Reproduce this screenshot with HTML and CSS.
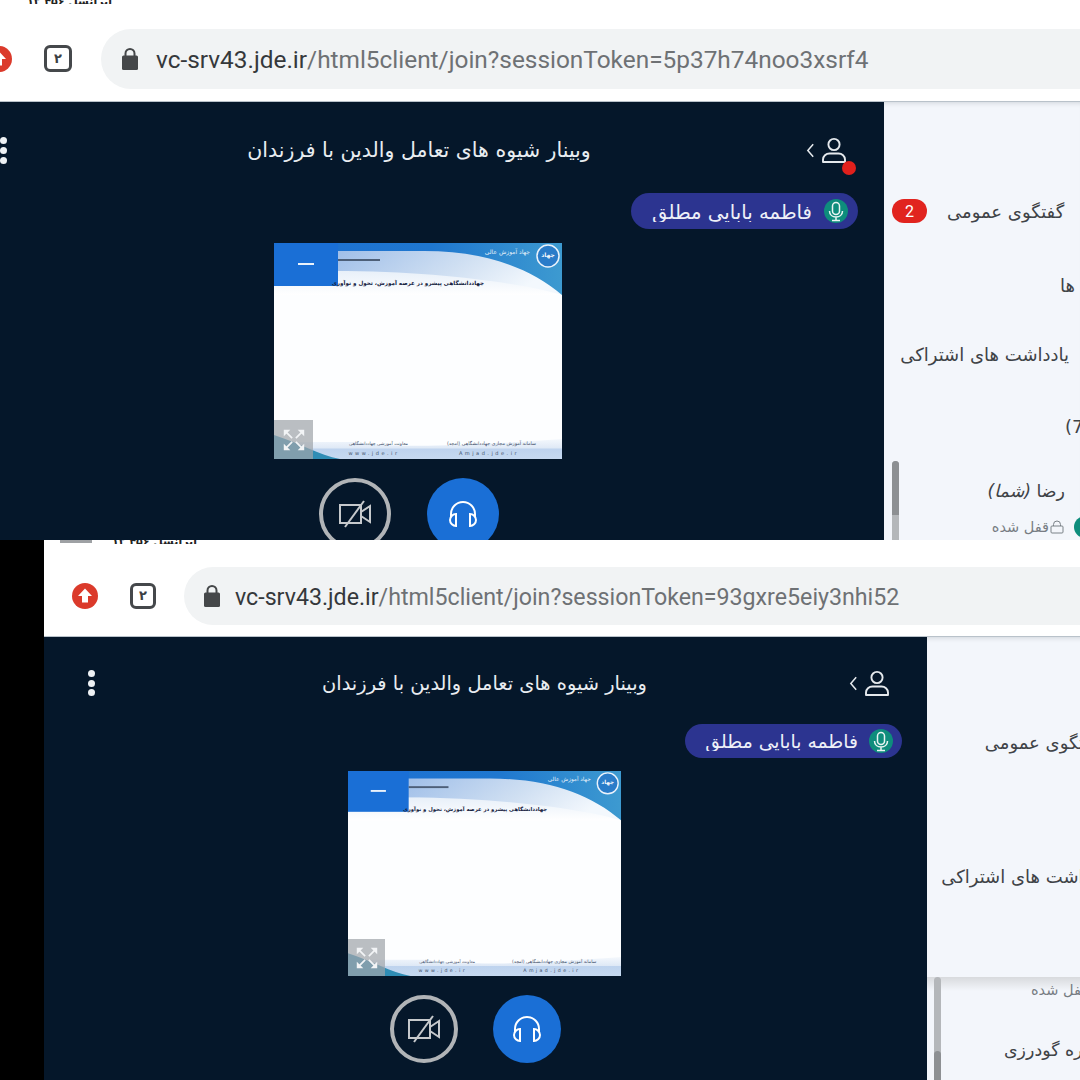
FILE: index.html
```html
<!DOCTYPE html>
<html lang="fa">
<head>
<meta charset="utf-8">
<title>وبینار</title>
<link rel="stylesheet" href="styles.css">
</head>
<body>
<svg class="defs" width="0" height="0">
  <defs>
    <linearGradient id="bandGrad" x1="0" y1="0" x2="1" y2="0"><stop offset="0" stop-color="#1d70d2"/><stop offset=".55" stop-color="#1f77cf"/><stop offset="1" stop-color="#3d9ad0"/></linearGradient>
    <linearGradient id="sheenGrad" x1="0" y1="0" x2="1" y2="0.3"><stop offset="0" stop-color="#9dbde8"/><stop offset=".6" stop-color="#cfdff2"/><stop offset="1" stop-color="#f3f8fd"/></linearGradient>
    <linearGradient id="fadeGrad" x1="0" y1="0" x2="0" y2="1"><stop offset="0" stop-color="#e8f0f9"/><stop offset="1" stop-color="#ffffff"/></linearGradient>
    <linearGradient id="footGrad" x1="0" y1="0" x2="0" y2="1"><stop offset="0" stop-color="#f4f8fd"/><stop offset=".45" stop-color="#dfe9f6"/><stop offset=".5" stop-color="#bed3ee"/><stop offset="1" stop-color="#c6d9f0"/></linearGradient>
    <symbol id="slide" viewBox="0 0 288 216" preserveAspectRatio="none">
      <rect width="288" height="216" fill="#fdfeff"/>
      <rect y="28" width="288" height="24" fill="url(#fadeGrad)"/>
      <path d="M60 4H288V52C255 42 170 28 60 28Z" fill="url(#sheenGrad)"/>
      <path d="M0 8H150C210 8 255 24 288 52V0H0Z" fill="url(#bandGrad)"/>
      <rect width="64" height="43" fill="#1a6fd6"/>
      <rect x="24" y="20" width="16" height="2" fill="#eaf2fb"/>
      <ellipse cx="274" cy="13" rx="11" ry="11" fill="#2a7cc9" stroke="#eaf2fb" stroke-width="1.500"/>
      <text class="slide-logo" x="274" y="14" text-anchor="middle">جهاد</text>
      <text class="slide-brand" x="256" y="11" text-anchor="end">جهاد آموزش عالی</text>
      <rect x="64" y="16" width="42" height="2" fill="#4d5f78"/>
      <path d="M0 199H80C120 205 180 204 288 196V216H0Z" fill="url(#footGrad)"/>
      <path d="M0 192C25 200 45 212 66 216H0Z" fill="#2f8db5"/>
      <text class="slide-head" x="210" y="42" text-anchor="end">جهاددانشگاهی پیشرو در عرصه آموزش، تحول و نوآوری</text>
      <text class="slide-foot wide" x="262" y="202" text-anchor="end">سامانه آموزش مجازی جهاددانشگاهی (امجد)</text>
      <text class="slide-foot" x="134" y="202" text-anchor="end">معاونت آموزشی جهاددانشگاهی</text>
      <text class="slide-url" x="100" y="212" text-anchor="middle">www.jde.ir</text>
      <text class="slide-url" x="215" y="212" text-anchor="middle">Amjad.jde.ir</text>
    </symbol>
    <symbol id="user" viewBox="0 0 26 26"><circle cx="13" cy="7.5" r="5.6" fill="none" stroke="currentColor" stroke-width="1.9"/><path d="M2 25v-2.5c0-3.500 3-6 6.500-6h9c3.500 0 6.500 2.500 6.500 6V25Z" fill="none" stroke="currentColor" stroke-width="1.9" stroke-linejoin="round"/></symbol>
    <symbol id="chev" viewBox="0 0 10 18"><path d="M8 2 2 9l6 7" fill="none" stroke="currentColor" stroke-width="1.7"/></symbol>
    <symbol id="mic" viewBox="0 0 24 24"><circle cx="12" cy="12" r="12" fill="#0e8d7c"/><rect x="8.500" y="3.500" width="7" height="12" rx="3.500" fill="none" stroke="#e9f5f3" stroke-width="1.500"/><path d="M5.500 12c0 8 13 8 13 0M12 17.500v3.500M8 21.500h8" fill="none" stroke="#e9f5f3" stroke-width="1.500"/></symbol>
    <symbol id="lock" viewBox="0 0 16 23"><path d="M3.500 9V6.500a4.500 4.500 0 0 1 9 0V9" fill="none" stroke="#454749" stroke-width="2"/><rect y="8.500" width="16" height="14.500" rx="1.500" fill="#454749"/></symbol>
    <symbol id="up" viewBox="0 0 26 26"><circle cx="13" cy="13" r="13" fill="#db3a2b"/><path d="M13 5.500 20 13h-4v6.500h-6V13H6Z" fill="#fff"/></symbol>
    <symbol id="cam" viewBox="0 0 34 28"><path d="M2 5h21v18H2ZM23 12l9-6v16l-9-6" fill="none" stroke="#c6c9cc" stroke-width="2"/><path d="M7 27 26 1" stroke="#c6c9cc" stroke-width="2"/></symbol>
    <symbol id="phones" viewBox="0 0 32 30"><path d="M4 19v-4a12 12 0 0 1 24 0v4" fill="none" stroke="#fff" stroke-width="2"/><path d="M9 15v12c-3 0-6-2.500-6-6s3-6 6-6ZM23 15v12c3 0 6-2.500 6-6s-3-6-6-6Z" fill="#1a6fd6" stroke="#fff" stroke-width="2"/></symbol>
    <symbol id="expand" viewBox="0 0 28 28"><path d="M3 3h7L3 10ZM25 3h-7l7 7ZM3 25h7l-7-7ZM25 25h-7l7-7Z" fill="#f2f4f6"/><path d="M5 5l7 7M23 5l-7 7M5 23l7-7M23 23l-7-7" stroke="#f2f4f6" stroke-width="1.800"/></symbol>
    <symbol id="tinylock" viewBox="0 0 14 14"><path d="M3.500 6V4.500a3.500 3.500 0 0 1 7 0V6" fill="none" stroke="#7b8288"/><rect x="1" y="6" width="12" height="7" rx="1" fill="none" stroke="#7b8288"/></symbol>
  </defs>
</svg>

<section class="shot shot-a">
  <div class="status"><span class="status-text">ایرانسل ۴۵۶ ۱۲</span></div>
  <div class="toolbar">
    <svg class="up-icon"><use href="#up"/></svg>
    <div class="tab-icon">۲</div>
    <div class="omnibox">
      <svg class="lock-icon"><use href="#lock"/></svg>
      <div class="url" dir="ltr"><span class="host">vc-srv43.jde.ir</span>/html5client/join?sessionToken=5p37h74noo3xsrf4</div>
    </div>
  </div>
  <div class="body">
    <main class="main">
      <header class="head">
        <div class="kebab"><i></i><i></i><i></i></div>
        <h1 class="title">وبینار شیوه های تعامل والدین با فرزندان</h1>
        <div class="users">
          <svg class="chev"><use href="#chev"/></svg>
          <svg class="user"><use href="#user"/></svg>
          <span class="red-dot"></span>
        </div>
      </header>
      <div class="talk-row">
        <div class="pill"><svg class="mic"><use href="#mic"/></svg><span class="name">فاطمه بابایی مطلق</span></div>
      </div>
      <div class="stage">
        <div class="slide"><svg class="slide-art"><use href="#slide"/></svg><div class="expand"><svg><use href="#expand"/></svg></div></div>
      </div>
      <div class="controls">
        <div class="round cam"><svg><use href="#cam"/></svg></div>
        <div class="round audio"><svg><use href="#phones"/></svg></div>
      </div>
    </main>
    <aside class="side">
      <div class="row row-chat"><span class="badge">2</span><span>گفتگوی عمومی</span></div>
      <div class="row row-ha"><span>ها</span></div>
      <div class="row row-notes"><span>یادداشت های اشتراکی</span></div>
      <div class="row row-count"><span dir="ltr">(7</span></div>
      <div class="list">
        <div class="scrollbar"><i></i></div>
        <div class="person">
          <div class="person-name">رضا <em>(شما)</em></div>
          <div class="person-state"><span class="avatar"></span><svg class="tiny"><use href="#tinylock"/></svg><span>قفل شده</span></div>
        </div>
      </div>
    </aside>
  </div>
</section>

<section class="shot shot-b">
  <div class="status"><span class="status-box"></span><span class="status-text">ایرانسل ۴۵۶ ۱۲</span></div>
  <div class="toolbar">
    <svg class="up-icon"><use href="#up"/></svg>
    <div class="tab-icon">۲</div>
    <div class="omnibox">
      <svg class="lock-icon"><use href="#lock"/></svg>
      <div class="url" dir="ltr"><span class="host">vc-srv43.jde.ir</span>/html5client/join?sessionToken=93gxre5eiy3nhi52</div>
    </div>
  </div>
  <div class="body">
    <main class="main">
      <header class="head">
        <div class="kebab"><i></i><i></i><i></i></div>
        <h1 class="title">وبینار شیوه های تعامل والدین با فرزندان</h1>
        <div class="users">
          <svg class="chev"><use href="#chev"/></svg>
          <svg class="user"><use href="#user"/></svg>
        </div>
      </header>
      <div class="talk-row">
        <div class="pill"><svg class="mic"><use href="#mic"/></svg><span class="name">فاطمه بابایی مطلق</span></div>
      </div>
      <div class="stage">
        <div class="slide"><svg class="slide-art"><use href="#slide"/></svg><div class="expand"><svg><use href="#expand"/></svg></div></div>
      </div>
      <div class="controls">
        <div class="round cam"><svg><use href="#cam"/></svg></div>
        <div class="round audio"><svg><use href="#phones"/></svg></div>
      </div>
    </main>
    <aside class="side">
      <div class="row row-chat"><span>گفتگوی عمومی</span></div>
      <div class="row row-notes"><span>یادداشت های اشتراکی</span></div>
      <div class="list">
        <div class="scrollbar"><i></i></div>
        <div class="person">
          <div class="person-state"><span>قفل شده</span></div>
          <div class="person-name">زهره گودرزی</div>
        </div>
      </div>
    </aside>
  </div>
</section>
</body>
</html>
```

FILE: styles.css
```css
* { box-sizing: border-box; }
html, body { margin: 0; padding: 0; }
body { width: 1080px; height: 1080px; overflow: hidden; background: #000; font-family: "DejaVu Sans", sans-serif; }
.defs { position: absolute; }

.shot { height: 540px; overflow: hidden; display: flex; flex-direction: column; position: relative; }
.shot-a { background: #fff; }
.shot-b { margin-left: 44px; background: #fff; }

/* toolbar */
.toolbar { flex: none; display: flex; align-items: center; background: #fff; border-bottom: 1px solid #b9c2ca; }
.shot-a .toolbar { height: 102px; padding-top: 16px; padding-left: 0; }
.shot-b .toolbar { height: 97px; padding-left: 28px; padding-top: 15px; }
.up-icon { flex: none; width: 26px; height: 26px; }
.shot-a .up-icon { margin-left: -14px; }
.tab-icon { flex: none; display: flex; align-items: center; justify-content: center; border: 3px solid #45484b; border-radius: 6px; color: #3c3f42; font: 700 13px "DejaVu Sans", sans-serif; }
.shot-a .tab-icon { width: 28px; height: 27px; margin-left: 32px; }
.shot-b .tab-icon { width: 26px; height: 26px; margin-left: 32px; }
.omnibox { flex: none; display: flex; align-items: center; background: #f1f3f4; border-radius: 30px; width: 1100px; }
.shot-a .omnibox { height: 60px; margin-left: 29px; padding-left: 21px; gap: 18px; }
.shot-b .omnibox { height: 58px; margin-left: 28px; padding-left: 20px; gap: 15px; }
.lock-icon { flex: none; width: 16px; height: 23px; }
.url { font-family: Roboto, sans-serif; color: #6e7174; white-space: nowrap; padding-top: 2px; }
.host { color: #35383b; }
.shot-a .url { font-size: 24.4px; }
.shot-b .url { font-size: 23.2px; }

/* body */
.body { flex: 1; display: flex; min-height: 0; }
.main { flex: none; display: flex; flex-direction: column; background: #05172a; color: #e9edf1; }
.main > * { flex: none; }
.shot-a .main { width: 884px; }
.shot-b .main { width: 883px; }

.head { display: flex; align-items: center; position: relative; }
.shot-a .head { height: 96px; padding: 0 37px 0 0; }
.shot-b .head { height: 92px; padding: 0 37px 0 0; }
.kebab { flex: none; display: flex; flex-direction: column; justify-content: space-between; }
.kebab i { display: block; border-radius: 50%; background: #eef1f4; }
.shot-a .kebab { width: 7px; height: 27px; margin-left: 0; }
.shot-a .kebab i { width: 7px; height: 7px; }
.shot-b .kebab { width: 7px; height: 26px; margin-left: 44px; }
.shot-b .kebab i { width: 7px; height: 7px; }
.title { flex: 1; margin: 0; font-weight: 400; text-align: center; white-space: nowrap; }
.shot-a .title { font-size: 20.5px; padding-left: 25px; }
.shot-b .title { font-size: 19.4px; padding-left: 25px; }
.users { flex: none; display: flex; align-items: center; gap: 6px; position: relative; color: #e5e9ed; }
.chev { width: 9px; height: 17px; }
.user { width: 26px; height: 26px; }
.red-dot { position: absolute; right: -9px; bottom: -12px; width: 14px; height: 14px; border-radius: 50%; background: #e1201c; }

.talk-row { display: flex; justify-content: flex-end; margin-top: -5px; }
.shot-a .talk-row { padding-right: 26px; }
.shot-b .talk-row { padding-right: 25px; }
.pill { display: flex; flex-direction: row-reverse; align-items: center; background: #2c3490; border-radius: 20px; color: #eef0f8; }
.shot-a .pill { height: 36px; padding: 0 10px 0 21px; gap: 12px; }
.shot-b .pill { height: 34px; padding: 0 9px 0 20px; gap: 11px; }
.mic { flex: none; width: 24px; height: 24px; }
.name { display: block; overflow: hidden; white-space: nowrap; direction: rtl; }
.shot-a .name { font-size: 19.7px; height: 21px; line-height: 23px; }
.shot-b .name { font-size: 18.8px; height: 20px; line-height: 22px; }

.stage { display: flex; }
.shot-a .stage { padding: 14px 0 0 274px; }
.shot-b .stage { padding: 13px 0 0 304px; }
.slide { position: relative; flex: none; }
.shot-a .slide { width: 288px; height: 216px; }
.shot-b .slide { width: 273px; height: 205px; }
.slide-art { display: block; width: 100%; height: 100%; }
.slide-head { font: 700 5.600px "DejaVu Sans", sans-serif; fill: #14213f; }
.slide-logo { font: 700 6px "DejaVu Sans", sans-serif; fill: #f2f7fc; }
.slide-brand { font: 400 6px "DejaVu Sans", sans-serif; fill: #e8f1fa; }
.slide-foot { font: 400 4.500px "DejaVu Sans", sans-serif; fill: #3e4f69; }
.slide-foot.wide { font-size: 4.800px; }
.slide-url { font: 400 5px "DejaVu Sans", sans-serif; letter-spacing: 2.500px; fill: #3e4f69; }
.expand { position: absolute; left: 0; bottom: 0; display: flex; align-items: center; justify-content: center; background: rgba(160,165,170,.72); }
.shot-a .expand { width: 39px; height: 39px; }
.shot-b .expand { width: 37px; height: 37px; }
.expand svg { width: 26px; height: 26px; }

.controls { display: flex; }
.shot-a .controls { padding: 19px 0 0 319px; gap: 36px; }
.shot-b .controls { padding: 19px 0 0 346px; gap: 35px; }
.round { flex: none; border-radius: 50%; display: flex; align-items: center; justify-content: center; }
.shot-a .round { width: 72px; height: 72px; }
.shot-b .round { width: 68px; height: 68px; }
.round.cam { border: 4px solid #b1b4b7; }
.round.cam svg { width: 34px; height: 28px; }
.round.audio { background: #1a6fd6; }
.round.audio svg { width: 32px; height: 30px; }

/* sidebar */
.side { flex: none; background: #f3f6fb; color: #3f4347; display: flex; flex-direction: column; box-shadow: inset 0 5px 5px -4px #cfd4da; }
.shot-a .side { width: 196px; padding-top: 92px; }
.shot-b .side { width: 220px; padding-top: 88px; }
.row { display: flex; align-items: center; white-space: nowrap; font-size: 18px; flex: none; height: 34px; }
.shot-a .row { justify-content: flex-end; padding-right: 17px; }
.shot-b .row-chat { justify-content: flex-end; padding-right: 45px; }
.shot-b .row-notes { justify-content: flex-end; padding-right: 37px; }
.shot-a .row-chat { justify-content: flex-start; padding-left: 8px; gap: 20px; }
.shot-a .row-ha { margin-top: 40px; padding-right: 5px; }
.shot-a .row-notes { margin-top: 35px; padding-right: 11px; }
.shot-a .row-count { margin-top: 38px; padding-right: 0; justify-content: flex-start; padding-left: 181px; }
.shot-b .row-notes { margin-top: 100px; }
.badge { flex: none; width: 35px; height: 24px; border-radius: 12px; background: #e1241f; color: #fff; font: 400 16px Roboto, sans-serif; display: flex; align-items: center; justify-content: center; }

.list { flex: 1; display: flex; min-height: 0; }
.shot-a .list { margin-top: 18px; padding-left: 8px; }
.shot-b .list { margin-top: 84px; padding-left: 7px; background: linear-gradient(#d8dadd, #f3f6fb 14px); }
.scrollbar { flex: none; width: 7px; border-radius: 4px 4px 0 0; background: #b4b7ba; display: flex; flex-direction: column; justify-content: flex-start; }
.scrollbar i { display: block; background: #8d9093; border-radius: 4px 4px 0 0; }
.shot-a .scrollbar i { height: 54px; }
.shot-b .scrollbar i { margin-top: 74px; height: 30px; }
.person { flex: 1; display: flex; flex-direction: column; }
.shot-a .person { padding-top: 20px; align-items: flex-end; padding-right: 15px; }
.shot-b .person { padding-top: 5px; padding-left: 90px; align-items: flex-start; }
.person-name { font-size: 17.400px; white-space: nowrap; direction: rtl; }
.person-name em { font-style: italic; }
.person-state { color: #777d83; font-size: 14.500px; display: flex; flex-direction: row-reverse; align-items: center; gap: 1px; white-space: nowrap; }
.shot-a .person-state { margin-top: 15px; margin-right: -31px; }
.shot-b .person-name { margin-top: 42px; margin-left: -27px; }
.tiny { width: 14px; height: 14px; }
.avatar { width: 22px; height: 22px; border-radius: 50%; background: #0e8d7c; margin-left: 9px; flex: none; }

/* fragments of the phone status bar */
.status { position: absolute; top: 0; display: flex; align-items: flex-start; gap: 20px; z-index: 1; }
.shot-a .status { left: 27px; }
.shot-b .status { left: 16px; }
.status-box { width: 32px; height: 3px; background: #9ea1a4; }
.status-text { font: 700 11px/4px "DejaVu Sans", sans-serif; color: #222; height: 4px; overflow: hidden; letter-spacing: 1px; }
```
